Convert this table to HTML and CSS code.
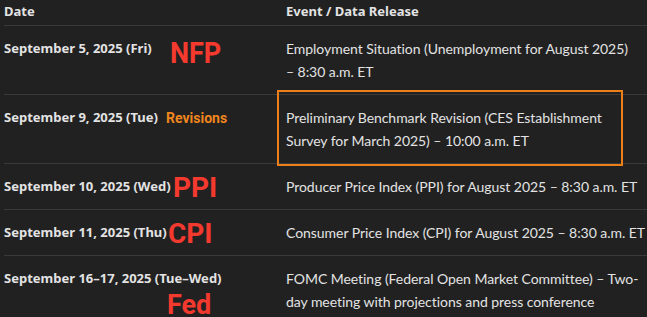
FILE: index.html
```html
<!DOCTYPE html>
<html lang="en">
<head>
<meta charset="utf-8">
<link rel="stylesheet" href="styles.css">
</head>
<body>
<div class="table">
  <div class="row head">
    <div class="cell date">Date</div>
    <div class="cell event">Event / Data Release</div>
  </div>
  <div class="row">
    <div class="cell date">September 5, 2025 (Fri)<span class="tag red nfp">NFP</span></div>
    <div class="cell event">Employment Situation (Unemployment for August 2025)<br>– 8:30 a.m. ET</div>
  </div>
  <div class="row">
    <div class="cell date">September 9, 2025 (Tue)<span class="tag orange rev">Revisions</span></div>
    <div class="cell event"><span class="box"></span>Preliminary Benchmark Revision (CES Establishment<br>Survey for March 2025) – 10:00 a.m. ET</div>
  </div>
  <div class="row">
    <div class="cell date">September 10, 2025 (Wed)<span class="tag red ppi">PPI</span></div>
    <div class="cell event">Producer Price Index (PPI) for August 2025 – 8:30 a.m. ET</div>
  </div>
  <div class="row">
    <div class="cell date">September 11, 2025 (Thu)<span class="tag red cpi">CPI</span></div>
    <div class="cell event">Consumer Price Index (CPI) for August 2025 – 8:30 a.m. ET</div>
  </div>
  <div class="row">
    <div class="cell date">September 16–17, 2025 (Tue–Wed)<span class="tag red fed">Fed</span></div>
    <div class="cell event">FOMC Meeting (Federal Open Market Committee) – Two-<br>day meeting with projections and press conference</div>
  </div>
</div>
</body>
</html>
```

FILE: styles.css
```css
html, body {
  margin: 0;
  background: #212121;
}
body {
  font-family: Lato, "Noto Sans", sans-serif;
  font-size: 14px;
  color: #e3e3e3;
  overflow: hidden;
}
.table {
  margin-left: 4px;
  width: 643px;
}
.row {
  display: grid;
  grid-template-columns: 272px 1fr;
  border-bottom: 1px solid #3a3a3a;
}
.cell {
  padding: 11px 0;
  line-height: 23px;
}
.head .cell {
  padding: 0 0 2px;
  font-weight: 700;
}
.date {
  position: relative;
  font-family: "Noto Sans", Lato, sans-serif;
  font-weight: 700;
  font-size: 13px;
}
.event {
  position: relative;
  padding-left: 10px;
  padding-right: 0;
  letter-spacing: -0.05px;
  white-space: nowrap;
}
.head .event {
  padding-left: 10px;
  font-family: "Noto Sans", Lato, sans-serif;
  font-size: 13px;
  letter-spacing: 0;
}
.tag {
  position: absolute;
  font-family: Roboto, "Liberation Sans", sans-serif;
  font-weight: 700;
  line-height: 1;
  letter-spacing: 0;
}
.red { color: #f4392f; }
.orange { color: #f0861e; }
.nfp {
  left: 166px;
  top: 12px;
  font-size: 30px;
  transform: scaleX(0.9);
  transform-origin: left top;
}
.rev { left: 162px; top: 16px; font-size: 14px; }
.ppi { left: 169px; top: 10px; font-size: 28px; }
.cpi { left: 164px; top: 10px; font-size: 28px; }
.fed { left: 163px; top: 39px; font-size: 27px; line-height: 20px; }
.box {
  position: absolute;
  left: 1px;
  top: -5px;
  width: 342px;
  height: 72px;
  border: 2px solid #ec7f17;
}
```
